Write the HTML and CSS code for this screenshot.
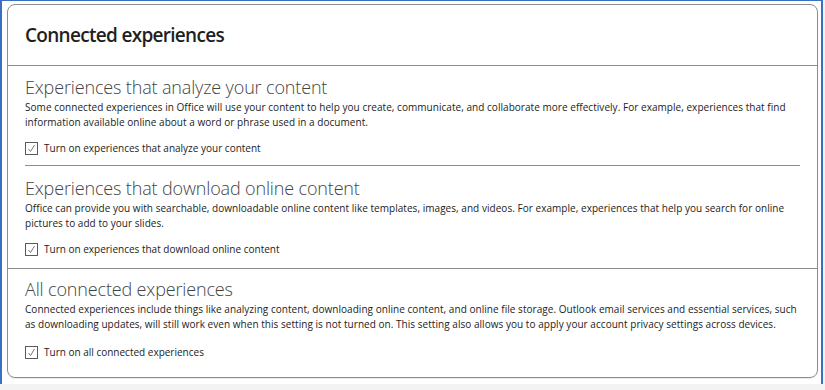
FILE: index.html
```html
<!DOCTYPE html>
<html lang="en">
<head>
<meta charset="UTF-8" />
<meta name="viewport" content="width=device-width, initial-scale=1" />
<title>Connected experiences</title>
<link rel="stylesheet" href="styles.css">
</head>
<body>

<div class="frame">
  <div class="card">
    <div class="card-header">
      <h1>Connected experiences</h1>
    </div>

    <div class="section">
      <div class="block first divided">
        <h2>Experiences that analyze your content</h2>
        <p>Some connected experiences in Office will use your content to help you create, communicate, and collaborate more effectively. For example, experiences that find<br>information available online about a word or phrase used in a document.</p>
        <label class="check">
          <span class="box"><svg width="11" height="11" viewBox="0 0 11 11"><polyline points="2.5,6 4.5,8.5 8.5,2" /></svg></span>
          Turn on experiences that analyze your content
        </label>
      </div>
      <div class="block second">
        <h2>Experiences that download online content</h2>
        <p>Office can provide you with searchable, downloadable online content like templates, images, and videos. For example, experiences that help you search for online<br>pictures to add to your slides.</p>
        <label class="check">
          <span class="box"><svg width="11" height="11" viewBox="0 0 11 11"><polyline points="2.5,6 4.5,8.5 8.5,2" /></svg></span>
          Turn on experiences that download online content
        </label>
      </div>
    </div>

    <div class="section last">
      <div class="block third">
        <h2>All connected experiences</h2>
        <p>Connected experiences include things like analyzing content, downloading online content, and online file storage. Outlook email services and essential services, such<br>as downloading updates, will still work even when this setting is not turned on. This setting also allows you to apply your account privacy settings across devices.</p>
        <label class="check">
          <span class="box"><svg width="11" height="11" viewBox="0 0 11 11"><polyline points="2.5,6 4.5,8.5 8.5,2" /></svg></span>
          Turn on all connected experiences
        </label>
      </div>
    </div>
  </div>
</div>

</body>
</html>
```

FILE: styles.css
```css
* {
  box-sizing: border-box;
}
body {
  margin: 0;
  background: #f3f3f3;
  font-family: 'Open Sans', 'Noto Sans', sans-serif;
  color: #222;
}
.frame {
  width: 823px;
  height: 384px;
  background: #fff;
  border: 2px solid #3b6fc2;
  border-top-width: 1px;
  border-bottom: none;
  padding: 3px 0 0 5px;
}
.card {
  width: 811px;
  height: 374px;
  border: 1px solid #8c8c8c;
  border-radius: 8px;
  box-shadow: 0 1px 1px rgba(0, 0, 0, 0.08);
}
.card-header {
  height: 61px;
  display: flex;
  align-items: center;
  padding: 0 17px;
  border-bottom: 1px solid #8c8c8c;
}
h1 {
  margin: 0;
  font-size: 19px;
  font-weight: 600;
  line-height: 24px;
  letter-spacing: -0.7px;
  color: #1f1f1f;
}
.section {
  padding: 0 17px;
  border-bottom: 1px solid #8c8c8c;
}
.section.last {
  border-bottom: none;
}
.block {
  padding: 9px 0 10px;
}
.block.second {
  padding: 10px 0 12px;
}
.block.third {
  padding: 8px 0 0;
}
.block.divided {
  border-bottom: 1px solid #8c8c8c;
}
h2 {
  margin: 0;
  font-size: 18px;
  font-weight: 300;
  line-height: 24px;
  letter-spacing: -0.15px;
  color: #444;
}
p {
  margin: 1px 0 0;
  font-size: 10px;
  line-height: 15px;
  letter-spacing: 0.04px;
}
.check {
  display: flex;
  align-items: center;
  gap: 6px;
  margin-top: 12px;
  font-size: 10px;
  line-height: 13px;
}
.third .check {
  margin-top: 14px;
}
.box {
  width: 13px;
  height: 13px;
  border: 1px solid #5a5a5a;
  display: flex;
  align-items: center;
  justify-content: center;
}
.box polyline {
  fill: none;
  stroke: #777;
  stroke-width: 1;
}
```
